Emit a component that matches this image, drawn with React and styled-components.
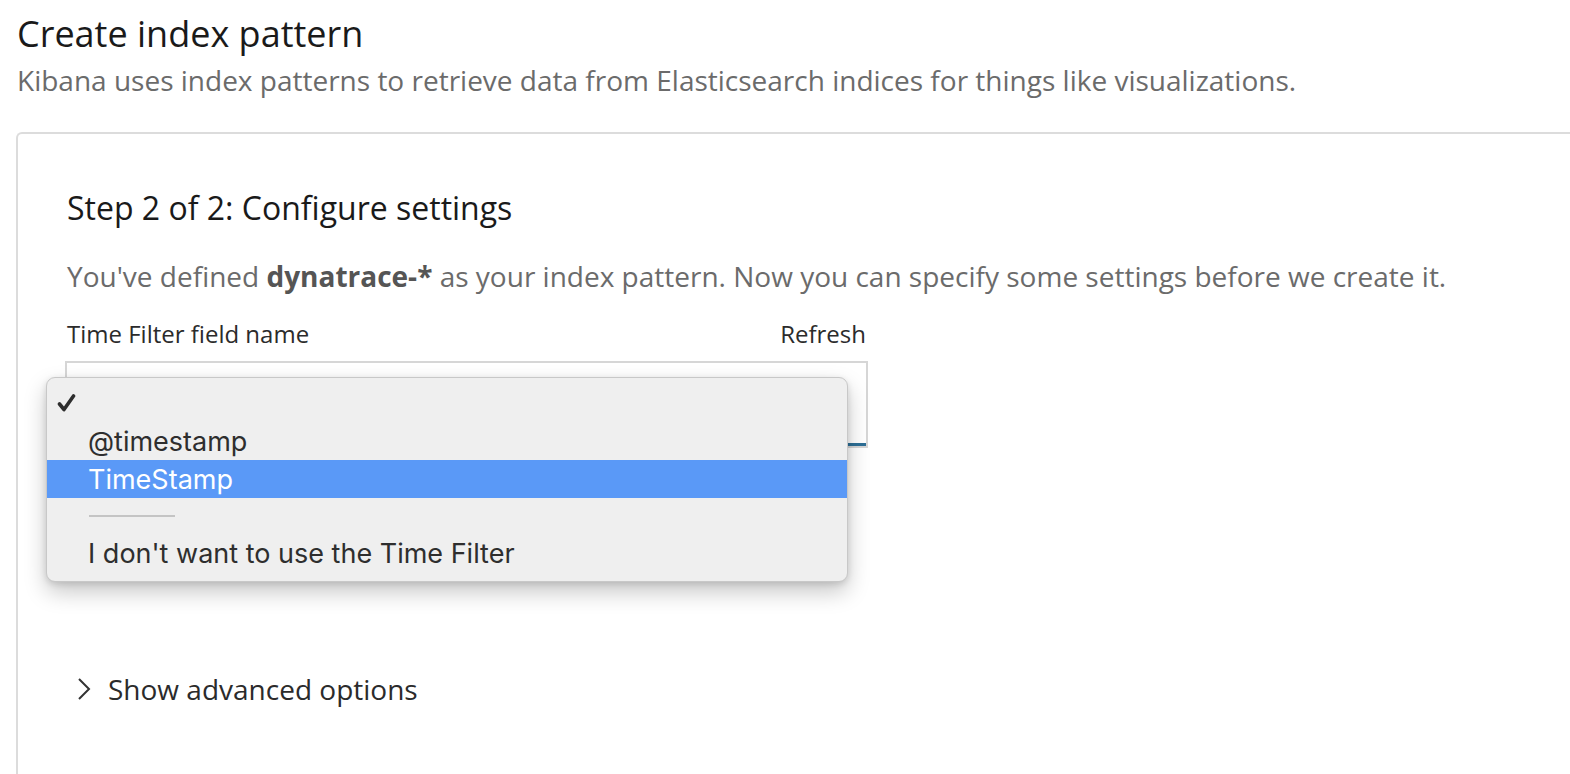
import styled, { createGlobalStyle } from "styled-components";

const GlobalStyle = createGlobalStyle`
  html, body {
    margin: 0;
    padding: 0;
    background: #fff;
    overflow: hidden;
  }
  body {
    font-family: "Open Sans", "Noto Sans", sans-serif;
  }
`;

const Page = styled.div`
  width: 1570px;
  height: 774px;
  padding: 11px 0 0 16px;
  box-sizing: border-box;
  overflow: hidden;
`;

const Title = styled.h1`
  margin: 0 0 0 1px;
  font-size: 36px;
  font-weight: 400;
  line-height: 46px;
  color: #1a1a1a;
`;

const Subtitle = styled.p`
  margin: 6px 0 0 1px;
  font-size: 28px;
  line-height: 34px;
  color: #6b6b6b;
`;

const Panel = styled.section`
  margin-top: 35px;
  width: 1600px;
  min-height: 700px;
  border: 2px solid #dcdcdc;
  border-right: none;
  border-radius: 6px 0 0 0;
  padding: 52px 0 0 49px;
  box-sizing: border-box;
`;

const StepTitle = styled.h2`
  margin: 0;
  font-size: 32px;
  font-weight: 400;
  line-height: 44px;
  color: #1a1a1a;
`;

const Lead = styled.p`
  margin: 28px 0 0;
  font-size: 28px;
  line-height: 36px;
  color: #6b6b6b;

  strong {
    font-weight: 700;
    color: #555;
  }
`;

const Field = styled.div`
  width: 803px;
  margin: 24px 0 0 -2px;
  position: relative;
`;

const LabelRow = styled.div`
  display: flex;
  justify-content: space-between;
  font-size: 24px;
  line-height: 32px;
  color: #2b2b2b;
  padding: 0 2px;
`;

const SelectBox = styled.div`
  margin-top: 11px;
  height: 87px;
  border: 2px solid #d6d6d6;
  box-sizing: border-box;
  position: relative;
  background: #fff;

  &::after {
    content: "";
    position: absolute;
    left: 0;
    right: 0;
    bottom: 0;
    height: 3px;
    background: #2d6f96;
  }
`;

const Menu = styled.ul`
  position: absolute;
  top: 59px;
  left: -19px;
  width: 802px;
  margin: 0;
  padding: 6px 0 9px;
  list-style: none;
  box-sizing: border-box;
  background: #efefef;
  border: 1px solid #c8c8c8;
  border-radius: 9px;
  box-shadow: 0 10px 22px rgba(0, 0, 0, 0.22), 0 2px 6px rgba(0, 0, 0, 0.12);
  font-family: Inter, "Liberation Sans", sans-serif;
  font-size: 27px;
  color: #2e2e2e;
  z-index: 2;
`;

const Option = styled.li`
  position: relative;
  height: 38px;
  display: flex;
  align-items: center;
  padding-left: 41px;
  background: ${(p) => (p.$active ? "#5a99f7" : "transparent")};
  color: ${(p) => (p.$active ? "#fff" : "#2e2e2e")};
`;

const Check = styled.svg`
  position: absolute;
  left: 10px;
  top: 10px;
  width: 19px;
  height: 18px;
`;

const Separator = styled.li`
  height: 36px;
  display: flex;
  align-items: center;
  padding-left: 42px;

  &::before {
    content: "";
    width: 86px;
    height: 2px;
    background: #c4c4c4;
  }
`;

const Advanced = styled.button`
  margin-top: 222px;
  margin-left: 10px;
  display: flex;
  align-items: center;
  gap: 17px;
  padding: 0;
  border: none;
  background: none;
  font-family: "Open Sans", sans-serif;
  font-size: 28px;
  line-height: 38px;
  color: #2b2b2b;
  cursor: pointer;
`;

export default function App() {
  return (
    <>
      <GlobalStyle />
      <Page>
        <Title>Create index pattern</Title>
        <Subtitle>
          Kibana uses index patterns to retrieve data from Elasticsearch indices for things like visualizations.
        </Subtitle>
        <Panel>
          <StepTitle>Step 2 of 2: Configure settings</StepTitle>
          <Lead>
            You've defined <strong>dynatrace-*</strong> as your index pattern. Now you can specify some settings
            before we create it.
          </Lead>
          <Field>
            <LabelRow>
              <span>Time Filter field name</span>
              <span>Refresh</span>
            </LabelRow>
            <SelectBox />
            <Menu>
              <Option>
                <Check viewBox="0 0 19 18">
                  <path d="M2.5 10 L7 15.5 L16.5 2" fill="none" stroke="#2e2e2e" strokeWidth="3.6" strokeLinecap="round" strokeLinejoin="round" />
                </Check>
                &nbsp;
              </Option>
              <Option>@timestamp</Option>
              <Option $active>TimeStamp</Option>
              <Separator />
              <Option>I don't want to use the Time Filter</Option>
            </Menu>
          </Field>
          <Advanced>
            <svg width="14" height="24" viewBox="0 0 14 24">
              <path d="M2 2 L12 12 L2 22" fill="none" stroke="#333" strokeWidth="2" />
            </svg>
            Show advanced options
          </Advanced>
        </Panel>
      </Page>
    </>
  );
}
